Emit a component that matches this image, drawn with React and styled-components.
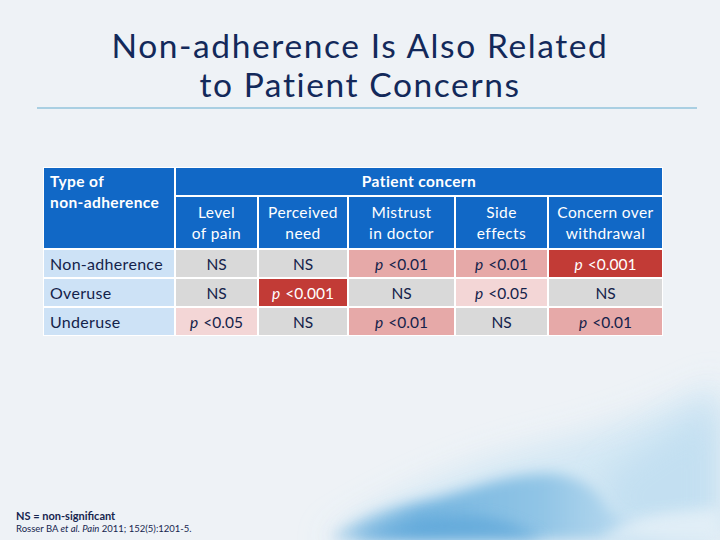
import React from "react";
import styled, { createGlobalStyle } from "styled-components";

const GlobalStyle = createGlobalStyle`
  html, body {
    margin: 0;
    padding: 0;
  }
  body {
    font-family: Lato, "Open Sans", sans-serif;
    background: #eef2f6;
  }
`;

const Slide = styled.div`
  position: relative;
  width: 720px;
  height: 540px;
  overflow: hidden;
  background: #eef2f6;
  display: flex;
  flex-direction: column;
`;

const Wash = styled.svg`
  position: absolute;
  left: 0;
  bottom: 0;
  width: 720px;
  height: 200px;
  z-index: 0;
`;

const Content = styled.div`
  position: relative;
  z-index: 1;
  display: flex;
  flex-direction: column;
  height: 100%;
`;

const Title = styled.h1`
  margin: 26px 0 0;
  font-weight: 400;
  font-size: 33.5px;
  letter-spacing: 1.6px;
  color: #13295a;
  text-align: center;
`;

const TitleLine = styled.div`
  height: 39px;
  line-height: 39px;
`;

const Rule = styled.hr`
  margin: 3px 23px 0 37px;
  border: none;
  height: 2px;
  background: #a9cfe2;
`;

const Grid = styled.div`
  margin: 59px 0 0 44px;
  width: 618px;
  display: grid;
  grid-template-columns: 130px 81px 88px 105px 91px 113px;
  grid-template-rows: 27px 51px 27px 27px 27px;
  gap: 2px;
  background: #ffffff;
  box-shadow: 0 0 0 1px #ffffff;
`;

const HeadCell = styled.div`
  background: #1168c6;
  color: #ffffff;
  font-size: 15.5px;
  letter-spacing: 0.4px;
  line-height: 21px;
  display: flex;
  flex-direction: column;
  justify-content: ${(p) => (p.$top ? "flex-start" : "center")};
  align-items: ${(p) => (p.$left ? "flex-start" : "center")};
  text-align: ${(p) => (p.$left ? "left" : "center")};
  font-weight: ${(p) => (p.$bold ? 700 : 400)};
  padding: ${(p) => (p.$left ? "3px 6px" : "0 2px")};
  grid-row: ${(p) => p.$row || "auto"};
  grid-column: ${(p) => p.$col || "auto"};
`;

const LabelCell = styled.div`
  background: #cde2f6;
  color: #14224a;
  font-size: 16px;
  letter-spacing: 0.3px;
  display: flex;
  align-items: center;
  padding: 0 6px;
`;

const tones = {
  ns: { bg: "#d9d9d9", fg: "#14224a" },
  light: { bg: "#f3d6d6", fg: "#14224a" },
  mid: { bg: "#e6a9a8", fg: "#14224a" },
  dark: { bg: "#c23b36", fg: "#ffffff" },
};

const ValueCell = styled.div`
  background: ${(p) => tones[p.$tone].bg};
  color: ${(p) => tones[p.$tone].fg};
  font-size: 15.5px;
  display: flex;
  align-items: center;
  justify-content: center;
  white-space: nowrap;
`;

const P = styled.i`
  margin-right: 5px;
`;

const Notes = styled.div`
  margin: auto 0 5px 16px;
  color: #16254f;
`;

const NoteMain = styled.div`
  font-size: 11px;
  line-height: 14px;
  font-weight: 700;
`;

const NoteRef = styled.div`
  font-size: 9.5px;
  line-height: 12px;
`;

const columns = [
  ["Level", "of pain"],
  ["Perceived", "need"],
  ["Mistrust", "in doctor"],
  ["Side", "effects"],
  ["Concern over", "withdrawal"],
];

const rows = [
  { label: "Non-adherence", cells: [["ns", "NS"], ["ns", "NS"], ["mid", "0.01"], ["mid", "0.01"], ["dark", "0.001"]] },
  { label: "Overuse", cells: [["ns", "NS"], ["dark", "0.001"], ["ns", "NS"], ["light", "0.05"], ["ns", "NS"]] },
  { label: "Underuse", cells: [["light", "0.05"], ["ns", "NS"], ["mid", "0.01"], ["ns", "NS"], ["mid", "0.01"]] },
];

const Value = ({ tone, text }) => (
  <ValueCell $tone={tone}>
    {text === "NS" ? "NS" : (<><P>p</P>&lt;{text}</>)}
  </ValueCell>
);

export default function App() {
  return (
    <Slide>
      <GlobalStyle />
      <Wash viewBox="0 0 720 200" preserveAspectRatio="none">
        <defs>
          <filter id="soft" x="-20%" y="-50%" width="140%" height="200%">
            <feGaussianBlur stdDeviation="7" />
          </filter>
          <filter id="softer" x="-20%" y="-50%" width="140%" height="200%">
            <feGaussianBlur stdDeviation="16" />
          </filter>
          <linearGradient id="deep" x1="0" y1="0" x2="1" y2="0">
            <stop offset="0" stopColor="#7ab7e0" stopOpacity="0.5" />
            <stop offset="0.25" stopColor="#6aafdd" stopOpacity="0.9" />
            <stop offset="0.6" stopColor="#86bfe4" stopOpacity="0.85" />
            <stop offset="1" stopColor="#c8e2f3" stopOpacity="0.6" />
          </linearGradient>
        </defs>
        <path
          d="M320 200 C 400 150, 470 120, 560 100 C 620 85, 680 60, 720 40 L 720 200 Z"
          fill="#d2e7f4"
          opacity="0.9"
          filter="url(#softer)"
        />
        <path
          d="M600 140 C 640 110, 690 80, 720 60 L 720 200 L 620 200 Z"
          fill="#bcdcf0"
          opacity="0.7"
          filter="url(#softer)"
        />
        <path
          d="M330 200 C 350 180, 390 168, 430 160 C 470 150, 500 136, 540 134 C 570 132, 595 145, 605 165 C 615 185, 660 192, 690 200 Z"
          fill="url(#deep)"
          filter="url(#soft)"
        />
        <path
          d="M350 200 C 380 184, 420 178, 460 176 C 495 174, 520 186, 545 200 Z"
          fill="#56a3d8"
          opacity="0.6"
          filter="url(#soft)"
        />
        <path
          d="M600 200 C 620 180, 660 170, 720 168 L 720 200 Z"
          fill="#e6f1f8"
          opacity="0.8"
          filter="url(#soft)"
        />
      </Wash>
      <Content>
        <Title>
          <TitleLine>Non-adherence Is Also Related</TitleLine>
          <TitleLine>to Patient Concerns</TitleLine>
        </Title>
        <Rule />
        <Grid>
          <HeadCell $left $top $bold $row="1 / span 2">
            Type of
            <br />
            non-adherence
          </HeadCell>
          <HeadCell $bold $col="2 / span 5">Patient concern</HeadCell>
          {columns.map(([a, b]) => (
            <HeadCell key={a}>
              <span>{a}</span>
              <span>{b}</span>
            </HeadCell>
          ))}
          {rows.map((r) => (
            <React.Fragment key={r.label}>
              <LabelCell>{r.label}</LabelCell>
              {r.cells.map(([tone, text], i) => (
                <Value key={i} tone={tone} text={text} />
              ))}
            </React.Fragment>
          ))}
        </Grid>
        <Notes>
          <NoteMain>NS = non-significant</NoteMain>
          <NoteRef>
            Rosser BA <i>et al.</i> <i>Pain</i> 2011; 152(5):1201-5.
          </NoteRef>
        </Notes>
      </Content>
    </Slide>
  );
}
